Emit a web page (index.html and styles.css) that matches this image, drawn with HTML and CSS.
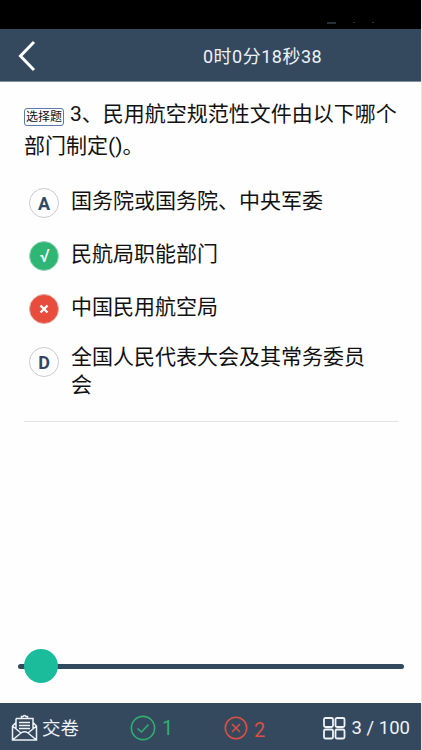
FILE: index.html
```
<!DOCTYPE html>
<html lang="zh-CN">
<head>
  <meta charset="UTF-8" />
  <meta name="viewport" content="width=device-width, initial-scale=1.0" />
  <title>选择题</title>
  <link rel="stylesheet" href="styles.css">
</head>
<body>
  <div class="app">
    <div class="status-bar"><i></i><i></i><i></i></div>

    <header class="header">
      <svg class="back" width="18" height="32" viewBox="0 0 18 32"><path d="M16 2 L2.500 16 L16 30" /></svg>
      <div class="timer">0时0分18秒38</div>
    </header>

    <main class="content">
      <div class="question"><span class="tag">选择题</span>3、民用航空规范性文件由以下哪个部门制定()。</div>

      <ul class="options">
        <li>
          <span class="mark">A</span>
          <p>国务院或国务院、中央军委</p>
        </li>
        <li>
          <span class="mark right">√</span>
          <p>民航局职能部门</p>
        </li>
        <li>
          <span class="mark wrong"><svg width="10" height="10" viewBox="0 0 10 10"><path d="M1.500 1.500 L8.500 8.500 M8.500 1.500 L1.500 8.500" /></svg></span>
          <p>中国民用航空局</p>
        </li>
        <li>
          <span class="mark">D</span>
          <p>全国人民代表大会及其常务委员会</p>
        </li>
      </ul>
    </main>

    <div class="slider">
      <div class="track"></div>
      <div class="thumb"></div>
    </div>

    <footer class="footer">
      <div class="item submit">
        <svg width="27" height="28" viewBox="0 0 27 28">
          <path d="M5 4.500 H22 V15 M5 4.500 V15 M5 8.500 L1.500 12 V26 H25.500 V12 L22 8.500 M1.500 12 L10 19 M25.500 12 L17 19 M1.500 26 L10 19 Q13.500 16.500 17 19 L25.500 26" />
          <path d="M10.500 4 V2.500 H12 A1.600 1.600 0 0 1 15 2.500 H16.500 V4 M8 8.500 H19 M8 11.500 H19 M8 14.500 H19" />
        </svg>
        <span>交卷</span>
      </div>
      <div class="item correct">
        <svg width="26" height="26" viewBox="0 0 26 26"><circle cx="13" cy="13" r="11.600" /><path d="M7.500 13.500 L11.500 17 L18.500 9.500" /></svg>
        <span>1</span>
      </div>
      <div class="item error">
        <svg width="24" height="24" viewBox="0 0 24 24"><circle cx="12" cy="12" r="10.700" /><path d="M8 8 L16 16 M16 8 L8 16" /></svg>
        <span>2</span>
      </div>
      <div class="item page">
        <svg width="23" height="23" viewBox="0 0 23 23">
          <rect x="1" y="1" width="9" height="9" rx="1.500" />
          <rect x="12.500" y="1" width="9" height="9" rx="1.500" />
          <rect x="1" y="12.500" width="9" height="9" rx="1.500" />
          <rect x="12.500" y="12.500" width="9" height="9" rx="1.500" />
        </svg>
        <span>3 / 100</span>
      </div>
    </footer>
  </div>
</body>
</html>
```
FILE: styles.css
```
* {
  box-sizing: border-box;
}

html, body {
  margin: 0;
  padding: 0;
  height: 100%;
}

body {
  background: #e4e5e8;
  color: #111;
  font-family: Roboto, "Noto Sans CJK SC", sans-serif;
  overflow: hidden;
}

svg {
  display: block;
  flex: none;
  fill: none;
  stroke: currentColor;
}

.app {
  display: flex;
  flex-direction: column;
  width: 421px;
  height: 750px;
  background: #fefefe;
}

.status-bar {
  display: flex;
  justify-content: flex-end;
  gap: 17px;
  height: 29px;
  padding: 22px 47px 0 0;
  background: #000;
}

.status-bar i {
  width: 2px;
  height: 1px;
  background: #26303c;
}

.status-bar i:first-child {
  width: 9px;
  height: 2px;
}

.header {
  display: flex;
  align-items: center;
  height: 53px;
  padding-left: 18px;
  background: #35495e;
  border-bottom: 1px solid #8290a0;
  color: #fff;
}

.back {
  margin-top: 2px;
  stroke-width: 3;
}

.timer {
  margin: 3px 0 0 167px;
  font-size: 18px;
  line-height: 24px;
  letter-spacing: 0.500px;
  color: #edf2f7;
}

.content {
  margin: 0 23px 0 24px;
  padding-top: 16px;
  height: 340px;
  border-bottom: 1px solid #e2e2e2;
}

.question {
  font-size: 21px;
  line-height: 32px;
}

.tag {
  display: inline-block;
  width: 40px;
  height: 18px;
  margin-right: 6px;
  border: 1px solid #5b7ba8;
  border-radius: 3px;
  font-size: 12px;
  line-height: 16px;
  text-align: center;
  vertical-align: 0;
}

.options {
  margin: 0;
  padding: 24px 0 0 5px;
  list-style: none;
}

.options li {
  display: flex;
  min-height: 53px;
}

.options p {
  width: 300px;
  margin: 1px 0 0 12px;
  font-size: 21px;
  line-height: 28px;
}

.options li:last-child p {
  margin-top: -2px;
}

.mark {
  display: flex;
  flex: none;
  align-items: center;
  justify-content: center;
  width: 30px;
  height: 30px;
  margin-top: 2px;
  border: 1px solid #c9cbcd;
  border-radius: 50%;
  font-size: 18px;
  font-weight: bold;
  color: #35495e;
}

.mark.right {
  background: #2fb574;
  border-color: #a5d8bd;
  color: #fff;
  font-family: "Open Sans", sans-serif;
  font-size: 15px;
}

.mark.wrong {
  background: #e74c3c;
  border-color: #e5aaa4;
  color: #fff;
}

.mark.wrong svg {
  stroke-width: 2.400;
}

.slider {
  position: relative;
  margin: auto 17px 20px 18px;
  padding: 15px 0 14px;
}

.track {
  height: 5px;
  border-radius: 3px;
  background: #35495e;
}

.thumb {
  position: absolute;
  top: 0;
  left: 6px;
  width: 34px;
  height: 34px;
  border-radius: 50%;
  background: #1abc9c;
}

.footer {
  display: flex;
  height: 47px;
  padding: 1px 11px 0 11px;
  background: #35495e;
  color: #edf2f7;
}

.item {
  display: flex;
  align-items: center;
  height: 48px;
  font-size: 20px;
}

.submit {
  width: 119px;
  gap: 4px;
  font-size: 18.500px;
}

.submit span {
  margin-top: -2px;
}

.submit svg {
  stroke-width: 1.500;
}

.correct {
  width: 94px;
  gap: 6px;
  color: #2fae72;
}

.error {
  gap: 6px;
  color: #d84f43;
}

.correct svg,
.error svg {
  stroke-width: 1.600;
}

.error span {
  margin-top: 3px;
}

.page {
  margin-left: auto;
  gap: 6px;
  font-size: 18.500px;
}

.page svg {
  stroke-width: 1.800;
}
```
